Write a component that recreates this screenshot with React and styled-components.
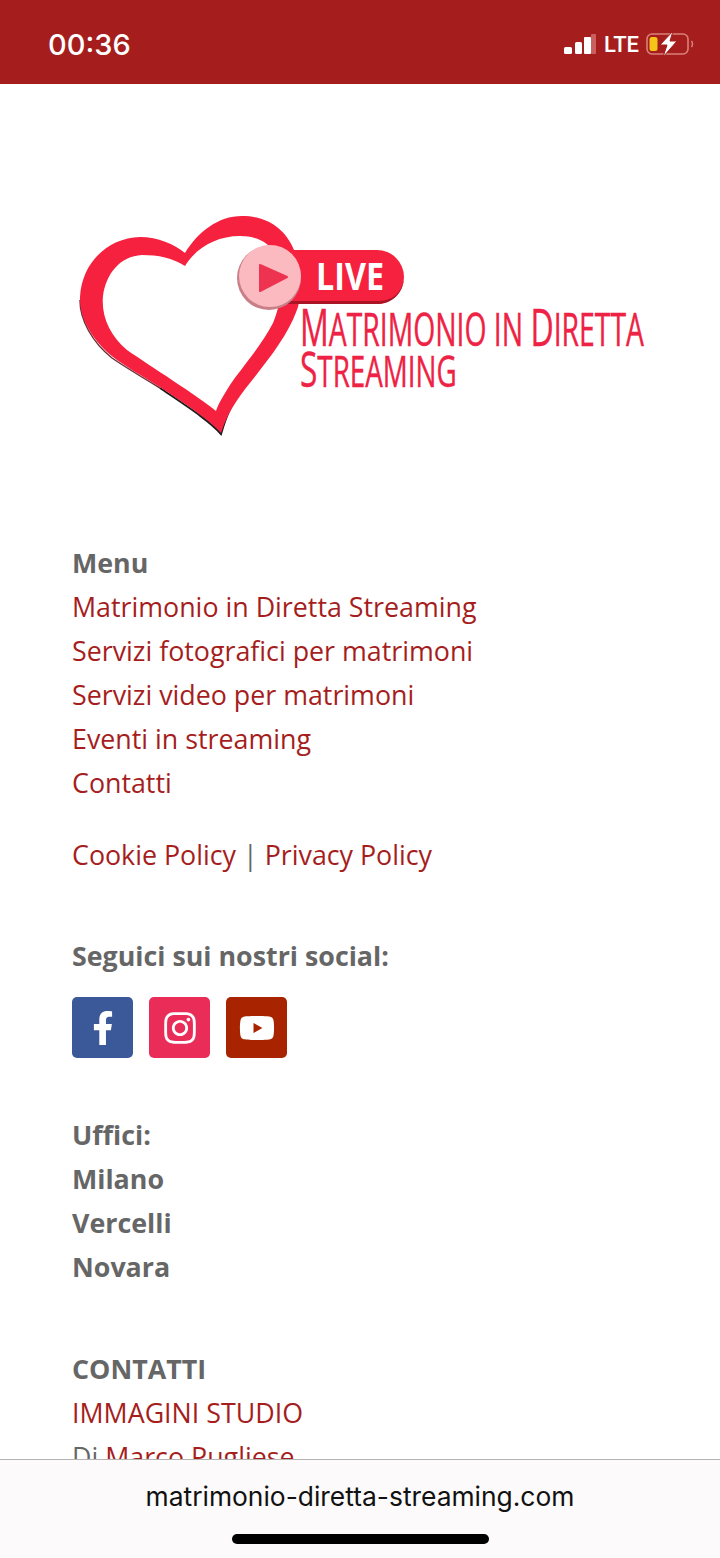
import React from 'react'
import styled, { createGlobalStyle } from 'styled-components'
import { FaFacebookF, FaInstagram, FaYoutube } from 'react-icons/fa'

const GlobalStyle = createGlobalStyle`
html, body {
  margin: 0;
  padding: 0;
  background: #fff;
}
* {
  box-sizing: border-box;
}
`

const Phone = styled.div`
  width: 720px;
  height: 1558px;
  display: flex;
  flex-direction: column;
  overflow: hidden;
  font-family: "Open Sans", sans-serif;
`

const StatusBar = styled.header`
  height: 84px;
  flex: none;
  background: #a51e1d;
  display: flex;
  align-items: center;
  justify-content: space-between;
  padding: 4px 26px 0 48px;
  color: #fff;
`
const Clock = styled.span`
  font-family: Inter, sans-serif;
  font-size: 29px;
  font-weight: 500;
`
const StatusIcons = styled.div`
  display: flex;
  align-items: center;
  gap: 8px;
`
const Network = styled.span`
  font-family: Roboto, sans-serif;
  font-size: 22px;
  font-weight: 500;
  width: 34px;
  white-space: nowrap;
`

const Content = styled.main`
  flex: 1;
  min-height: 0;
  overflow: hidden;
  padding: 0 0 0 72px;
`
const LogoWrap = styled.div`
  height: 457px;
  padding-top: 126px;
`
const LinkList = styled.div`
  display: flex;
  flex-direction: column;
  margin-bottom: ${props => props.$gap || 0}px;
`
const Line = styled.div`
  font-size: 26.8px;
  line-height: 44px;
  height: 44px;
  color: #666;
  white-space: nowrap;
`
const Heading = styled(Line)`
  font-weight: 700;
`
const Link = styled.a`
  color: #a51e1d;
  text-decoration: none;
`
const Socials = styled.div`
  display: flex;
  gap: 15px;
  margin: 19px 0 55px;
`
const SocialIcon = styled.div`
  width: 61px;
  height: 61px;
  border-radius: 5px;
  margin-right: 1px;
  background-color: ${props => props.color};
  color: #fff;
  display: flex;
  justify-content: center;
  align-items: center;
  font-size: ${props => props.$size}px;
`

const AddressBar = styled.footer`
  height: 99px;
  flex: none;
  background: #fcfafa;
  border-top: 1px solid #b4b4b4;
  display: flex;
  flex-direction: column;
  align-items: center;
`
const Url = styled.div`
  font-family: Inter, sans-serif;
  font-size: 26.4px;
  line-height: 32px;
  margin-top: 20px;
  color: #111;
`
const HomeIndicator = styled.div`
  width: 257px;
  height: 10px;
  border-radius: 5px;
  background: #000;
  margin-top: 22px;
`

const SignalIcon = () => (
  <svg width="32" height="22" viewBox="0 0 32 22">
    <rect x="0" y="14" width="8" height="7" rx="1.5" fill="#fff" />
    <rect x="11" y="9" width="7" height="12" rx="1.5" fill="#fff" />
    <rect x="20" y="4" width="7" height="17" rx="1" fill="#fff" />
    <rect x="27" y="1" width="5" height="20" rx="1" fill="#c9605f" />
  </svg>
)

const BatteryIcon = () => (
  <svg width="48" height="26" viewBox="0 0 48 26">
    <rect x="1" y="3" width="41" height="20" rx="5" fill="none" stroke="#d98078" strokeWidth="1.6" />
    <rect x="3.5" y="6" width="8" height="14" rx="2.5" fill="#f5c518" />
    <path d="M27 0 L14 14 L21 14 L17 26 L31 10 L24 10 Z" fill="#fff" stroke="#a51e1d" strokeWidth="1" />
    <path d="M45.5 10 Q47.5 13 45.5 16" fill="none" stroke="#d98078" strokeWidth="1.5" />
  </svg>
)

const HEART =
  'M221 433 C210 420 185 404 160 387 C140 375 125 366 113 357 C95 343 79 320 80 297 C82 262 108 238 140 237 C158 237 174 244 185 253 C198 232 218 216 242 216 C268 216 286 230 294 250 C300 270 301 295 298 307 C292 325 280 345 260 370 C245 390 230 405 221 433 Z ' +
  'M216 411 C198 396 150 366 127 350 C110 336 101 316 103 296 C106 274 120 256 142 255 C158 255 173 258 185 266 C196 248 216 236 240 236 C256 236 268 242 276 254 C284 272 284 296 273 323 C262 345 240 370 230 385 C224 395 219 402 216 411 Z'

// heart with the live badge and the site name next to it
const Logo = () => (
  <svg width="590" height="230" viewBox="72 210 590 230" style={{ display: 'block' }}>
    {/* dark edge along the lower sides of the heart */}
    <path d="M80 300 C80 320 92 342 112 358 C125 367 140 376 160 388" fill="none" stroke="#6b3038" strokeWidth="1.5" />
    <path d="M160 388 C185 405 210 421 221 434 C226 417 232 402 240 392" fill="none" stroke="#1c1c1c" strokeWidth="2" />
    <path d={HEART} fillRule="evenodd" fill="#f5213f" />
    <rect x="250" y="250" width="154" height="54" rx="27" fill="#f5213f" />
    <path d="M270 304 L377 304 C392 304 402 294 404 280 C400 296 390 301 377 301 L270 301 Z" fill="#a91525" />
    <circle cx="269" cy="278" r="32" fill="#c97f88" />
    <circle cx="270" cy="276" r="31" fill="#fbb9c0" />
    <path d="M260 265 L287 277 L260 291 Z" fill="#ee3350" stroke="#ee3350" strokeWidth="2" strokeLinejoin="round" />
    <text x="316" y="290" fontFamily="Open Sans" fontWeight="700" fontSize="37" fill="#fff" textLength="68" lengthAdjust="spacingAndGlyphs">
      LIVE
    </text>
    <text transform="translate(300 346) scale(0.616 1)" fontFamily="Open Sans" fontSize="46" fill="#ee2244" stroke="#ee2244" strokeWidth="0.4">
      <tspan fontSize="52">M</tspan>ATRIMONIO IN <tspan fontSize="52">D</tspan>IRETTA
    </text>
    <text transform="translate(300 387) scale(0.632 1)" fontFamily="Open Sans" fontSize="44" fill="#ee2244" stroke="#ee2244" strokeWidth="0.4">
      <tspan fontSize="50">S</tspan>TREAMING
    </text>
  </svg>
)

const menuLinks = [
  'Matrimonio in Diretta Streaming',
  'Servizi fotografici per matrimoni',
  'Servizi video per matrimoni',
  'Eventi in streaming',
  'Contatti',
]

const App = () => {
  return (
    <Phone>
      <GlobalStyle />
      <StatusBar>
        <Clock>00:36</Clock>
        <StatusIcons>
          <SignalIcon />
          <Network>LTE</Network>
          <BatteryIcon />
        </StatusIcons>
      </StatusBar>

      <Content>
        <LogoWrap>
          <Logo />
        </LogoWrap>

        <LinkList $gap={28}>
          <Heading>Menu</Heading>
          {menuLinks.map(label => (
            <Line key={label}><Link href="#">{label}</Link></Line>
          ))}
        </LinkList>

        <LinkList $gap={57}>
          <Line><Link href="#">Cookie Policy</Link> | <Link href="#">Privacy Policy</Link></Line>
        </LinkList>

        <Heading>Seguici sui nostri social:</Heading>
        <Socials>
          <SocialIcon color="#3b5998" $size={34}><FaFacebookF /></SocialIcon>
          <SocialIcon color="#ea2c59" $size={36}><FaInstagram /></SocialIcon>
          <SocialIcon color="#a82400" $size={36}><FaYoutube /></SocialIcon>
        </Socials>

        <LinkList $gap={58}>
          <Heading>Uffici:</Heading>
          <Heading>Milano</Heading>
          <Heading>Vercelli</Heading>
          <Heading>Novara</Heading>
        </LinkList>

        <LinkList>
          <Heading>CONTATTI</Heading>
          <Line><Link href="#">IMMAGINI STUDIO</Link></Line>
          <Line>Di <Link href="#">Marco Pugliese</Link></Line>
        </LinkList>
      </Content>

      <AddressBar>
        <Url>matrimonio-diretta-streaming.com</Url>
        <HomeIndicator />
      </AddressBar>
    </Phone>
  )
}

export default App
